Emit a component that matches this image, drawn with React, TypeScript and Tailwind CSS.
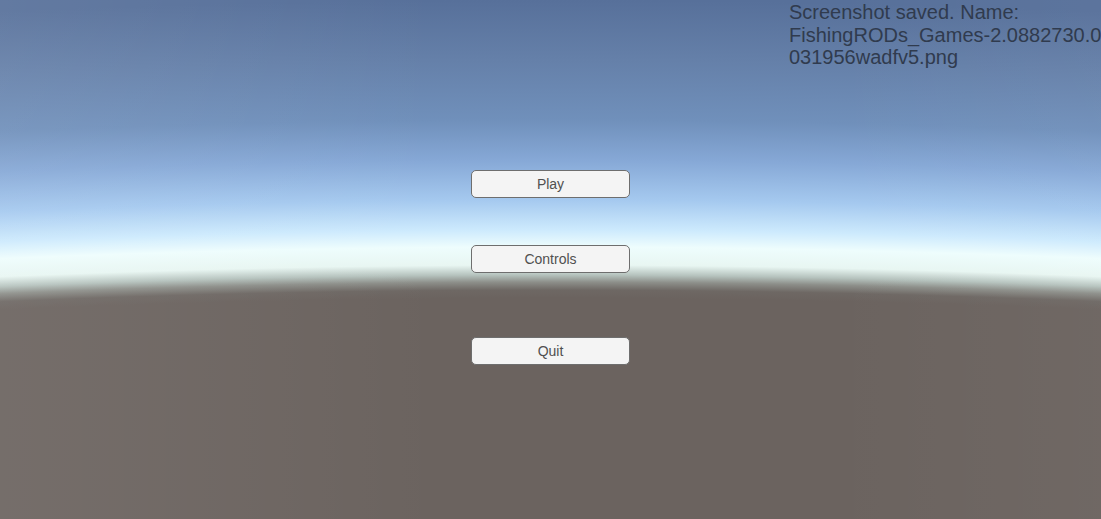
export default function App() {
  const buttons = [
    { label: "Play", mt: "mt-0" },
    { label: "Controls", mt: "mt-[47px]" },
    { label: "Quit", mt: "mt-[64px]" },
  ];

  return (
    <div className="relative w-[1101px] h-[519px] overflow-hidden bg-[#6b635f] font-['Liberation_Sans',Arial,sans-serif]">
      {/* skybox: curved horizon drawn as one huge radial gradient */}
      <div className="absolute inset-0 bg-[linear-gradient(to_right,rgba(255,255,255,0.07),rgba(255,255,255,0)_40%,rgba(255,255,255,0)_75%,rgba(255,255,255,0.03)),radial-gradient(circle_13283px_at_50%_13283px,#6b635f_12985px,#6e6864_12993px,#8d8f8a_13001px,#b5c2bd_13008px,#e8f6f2_13018px,#eefdfd_13036px,#cdeafd_13053px,#a5c9ef_13083px,#86a8d6_13123px,#7090bb_13163px,#6580a9_13223px,#57709a_13283px)]" />

      {/* screenshot notice */}
      <div className="absolute left-[789px] top-[1px] whitespace-nowrap text-[20px] leading-[22.5px] text-[#303b4e]">
        <div>Screenshot saved. Name:</div>
        <div>FishingRODs_Games-2.0882730.0</div>
        <div>031956wadfv5.png</div>
      </div>

      {/* main menu */}
      <div className="relative flex flex-col items-center pt-[170px]">
        {buttons.map((b) => (
          <button
            key={b.label}
            className={`${b.mt} w-[159px] h-[28px] rounded-[5px] border border-[#6e6e6e] bg-[#f4f4f4] text-[14px] text-[#505050] flex items-center justify-center`}
          >
            {b.label}
          </button>
        ))}
      </div>
    </div>
  );
}
